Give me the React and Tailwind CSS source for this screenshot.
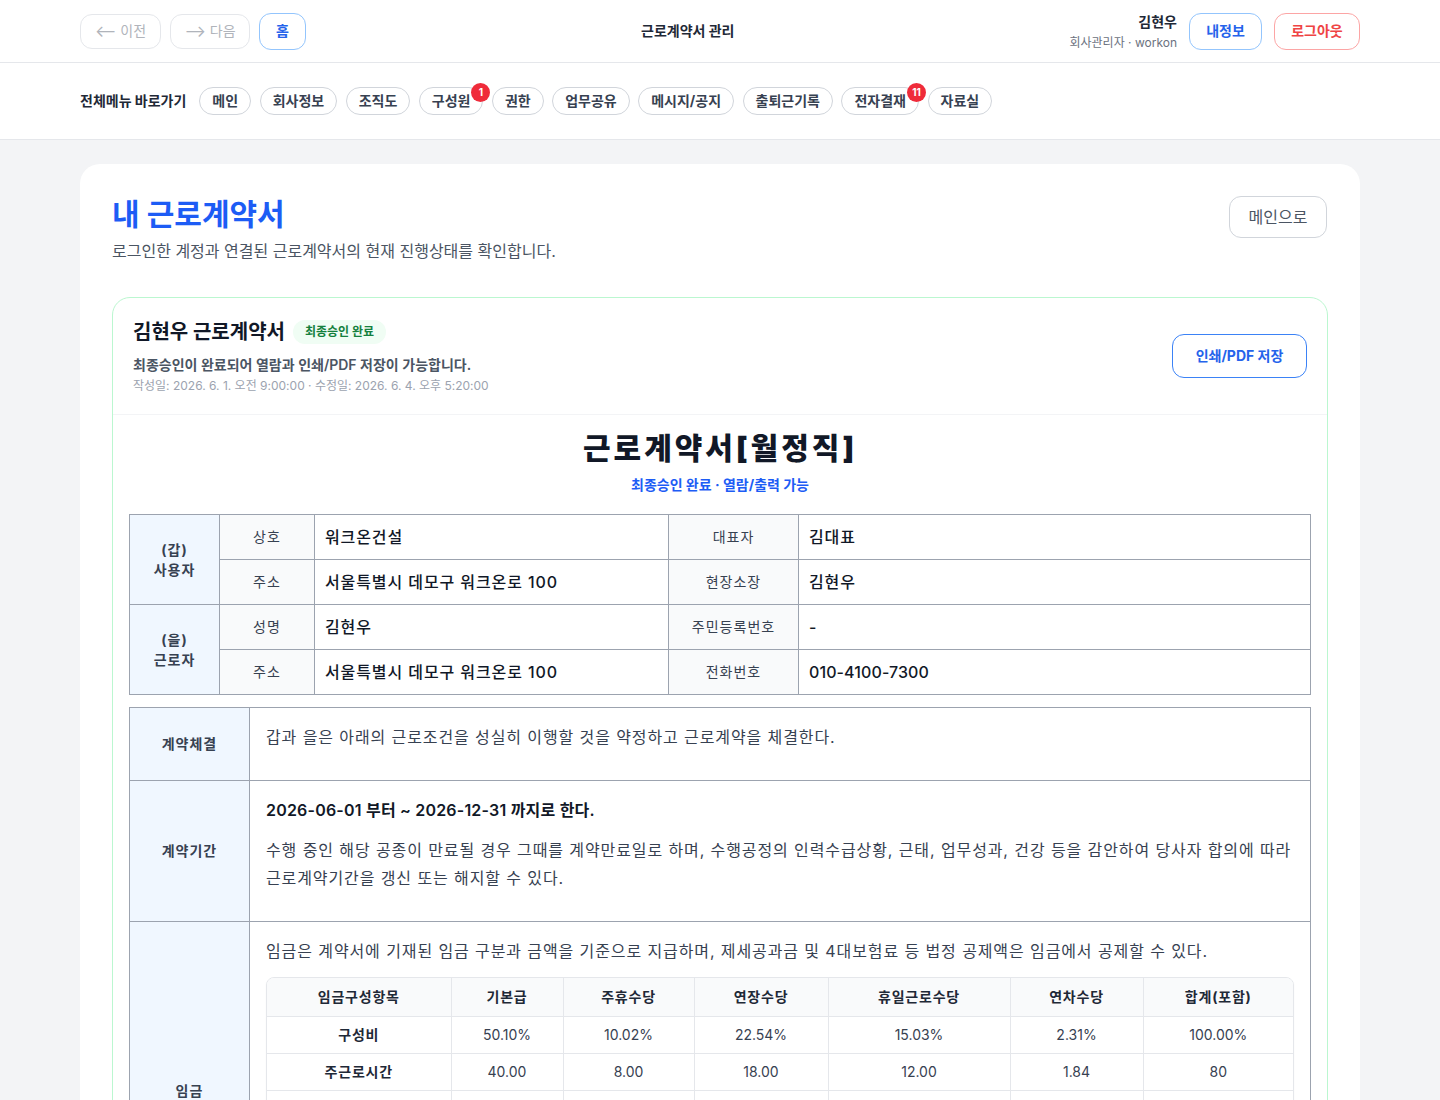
import React from "react";

const navItems = [
  { label: "메인" },
  { label: "회사정보" },
  { label: "조직도" },
  { label: "구성원", badge: "1" },
  { label: "권한" },
  { label: "업무공유" },
  { label: "메시지/공지" },
  { label: "출퇴근기록" },
  { label: "전자결재", badge: "11" },
  { label: "자료실" },
];

const wageHead = ["임금구성항목", "기본급", "주휴수당", "연장수당", "휴일근로수당", "연차수당", "합계(포함)"];
const wageRows = [
  ["구성비", "50.10%", "10.02%", "22.54%", "15.03%", "2.31%", "100.00%"],
  ["주근로시간", "40.00", "8.00", "18.00", "12.00", "1.84", "80"],
  ["월근로시간", "173.80", "34.76", "78.21", "52.14", "8.00", "346.91"],
  ["시급", "10,030", "10,030", "15,045", "15,045", "10,030", "-"],
  ["월 지급액", "1,743,214", "348,643", "1,176,669", "784,446", "80,240", "4,133,212"],
  ["비고", "-", "-", "-", "-", "-", "-"],
];
const wageCols = ["w-[184px]", "w-[112px]", "w-[131px]", "w-[134px]", "w-[182px]", "w-[133px]", "w-[150px]"];

export default function App() {
  return (
    <div className="min-h-screen bg-[#f3f4f6] font-['Inter','Noto_Sans_CJK_KR',sans-serif] text-[#111827]">
      {/* Top bar */}
      <header className="bg-white border-b border-[#e5e7eb] h-[63px] px-20 flex items-center justify-between">
        <div className="flex items-center gap-[9px]">
          <button className="h-[35px] w-[81px] rounded-xl border border-[#e5e7eb] text-[#b0b4bb] text-sm flex items-center justify-center gap-1">
            <span className="text-base leading-none">⟵</span> 이전
          </button>
          <button className="h-[35px] w-[80px] rounded-xl border border-[#e5e7eb] text-[#b0b4bb] text-sm flex items-center justify-center gap-1">
            <span className="text-base leading-none">⟶</span> 다음
          </button>
          <button className="h-[37px] w-[47px] rounded-xl border border-[#93c5fd] text-[#2563eb] text-sm font-bold">홈</button>
        </div>
        <div className="text-sm font-bold text-[#1f2937]">근로계약서 관리</div>
        <div className="flex items-center justify-end gap-3">
          <div className="flex flex-col items-end leading-tight">
            <span className="text-sm font-bold text-[#1f2937]">김현우</span>
            <span className="text-xs text-[#6b7280] mt-[3px]">회사관리자 · workon</span>
          </div>
          <button className="h-[37px] w-[73px] rounded-xl border border-[#93c5fd] text-[#2563eb] text-sm font-bold">내정보</button>
          <button className="h-[37px] w-[86px] rounded-xl border border-[#fca5a5] text-[#ef4444] text-sm font-bold">로그아웃</button>
        </div>
      </header>

      {/* Nav row */}
      <nav className="bg-white border-b border-[#e5e7eb] h-[77px] px-20 flex items-center">
        <span className="text-sm font-bold text-[#1f2937] mr-[13px]">전체메뉴 바로가기</span>
        <div className="flex items-center gap-[8.5px]">
          {navItems.map((n) => (
            <div key={n.label} className="relative">
              <span className="h-[28px] px-3 rounded-full border border-[#d1d5db] text-sm font-bold text-[#374151] flex items-center">
                {n.label}
              </span>
              {n.badge && (
                <span className="absolute -top-[4px] -right-[7px] min-w-[19px] h-[19px] px-[4px] rounded-full bg-[#ef2b3a] text-white text-[10px] font-bold flex items-center justify-center">
                  {n.badge}
                </span>
              )}
            </div>
          ))}
        </div>
      </nav>

      {/* Main */}
      <main className="px-20 pt-6 pb-10">
        <section className="bg-white rounded-[20px] px-8 pt-8 pb-8">
          <div className="flex items-start justify-between">
            <div>
              <h1 className="text-[30px] font-bold text-[#1d5cf5] leading-[36px]">내 근로계약서</h1>
              <p className="text-base text-[#4b5563] mt-[7px]">로그인한 계정과 연결된 근로계약서의 현재 진행상태를 확인합니다.</p>
            </div>
            <button className="h-[42px] w-[98px] rounded-xl border border-[#d1d5db] text-base text-[#4b5563] mr-px">메인으로</button>
          </div>

          <div className="mt-[34px] border border-[#bbf7d0] rounded-[18px] overflow-hidden">
            <div className="flex items-center justify-between px-5 pt-[20px] pb-[20px] border-b border-[#f3f4f6]">
              <div>
                <div className="flex items-center gap-[8px]">
                  <h2 className="text-xl font-bold text-[#111827]">김현우 근로계약서</h2>
                  <span className="h-[24px] px-[12px] rounded-full bg-[#f0fdf4] text-[#15803d] text-xs font-bold flex items-center">최종승인 완료</span>
                </div>
                <p className="text-sm font-semibold text-[#4b5563] mt-[9px]">최종승인이 완료되어 열람과 인쇄/PDF 저장이 가능합니다.</p>
                <p className="text-xs text-[#9ca3af] mt-[3px]">작성일: 2026. 6. 1. 오전 9:00:00 · 수정일: 2026. 6. 4. 오후 5:20:00</p>
              </div>
              <button className="h-[44px] w-[135px] rounded-xl border border-[#3b82f6] text-sm font-bold text-[#2563eb]">인쇄/PDF 저장</button>
            </div>

            <div className="px-4 pt-[15px] pb-8">
              <h3 className="text-center text-[30px] font-black tracking-[3px] text-[#111827] leading-[36px]">근로계약서[월정직]</h3>
              <p className="text-center text-sm font-bold text-[#1d5cf5] mt-[9px]">최종승인 완료 · 열람/출력 가능</p>

              {/* Parties table */}
              <table className="mt-[19px] w-full border-collapse border border-[#9ca3af] table-fixed">
                <colgroup>
                  <col className="w-[90px]" />
                  <col className="w-[95px]" />
                  <col className="w-[354px]" />
                  <col className="w-[130px]" />
                  <col />
                </colgroup>
                <tbody>
                  {[
                    ["(갑)\n사용자", "상호", "워크온건설", "대표자", "김대표"],
                    [null, "주소", "서울특별시 데모구 워크온로 100", "현장소장", "김현우"],
                    ["(을)\n근로자", "성명", "김현우", "주민등록번호", "-"],
                    [null, "주소", "서울특별시 데모구 워크온로 100", "전화번호", "010-4100-7300"],
                  ].map((r, i) => (
                    <tr key={i} className="h-[45px]">
                      {r[0] && (
                        <td rowSpan={2} className="border border-[#9ca3af] bg-[#f0f7ff] text-center text-sm font-bold tracking-[1px] text-[#374151] whitespace-pre-line leading-[20px]">
                          {r[0]}
                        </td>
                      )}
                      <td className="border border-[#9ca3af] bg-[#f9fafb] text-center text-sm tracking-[1px] text-[#374151]">{r[1]}</td>
                      <td className="border border-[#9ca3af] pl-[10px] pr-3 text-base font-medium tracking-[0.9px] text-[#111827]">{r[2]}</td>
                      <td className="border border-[#9ca3af] bg-[#f9fafb] text-center text-sm tracking-[1px] text-[#374151]">{r[3]}</td>
                      <td className={`border border-[#9ca3af] pl-[10px] pr-3 text-base font-medium text-[#111827] ${i === 3 ? "tracking-[0.1px]" : "tracking-[0.9px]"}`}>{r[4]}</td>
                    </tr>
                  ))}
                </tbody>
              </table>

              {/* Terms table */}
              <table className="mt-[12px] w-full border-collapse border border-[#9ca3af] table-fixed">
                <colgroup>
                  <col className="w-[120px]" />
                  <col />
                </colgroup>
                <tbody>
                  <tr>
                    <td className="border border-[#9ca3af] bg-[#f0f7ff] text-center text-sm font-bold tracking-[1px] text-[#374151] h-[73px]">계약체결</td>
                    <td className="border border-[#9ca3af] px-4 pt-[17px] pb-[26px] align-top text-base tracking-[0.9px] text-[#374151]">
                      갑과 을은 아래의 근로조건을 성실히 이행할 것을 약정하고 근로계약을 체결한다.
                    </td>
                  </tr>
                  <tr>
                    <td className="border border-[#9ca3af] bg-[#f0f7ff] text-center text-sm font-bold tracking-[1px] text-[#374151]">계약기간</td>
                    <td className="border border-[#9ca3af] px-4 pt-[17px] pb-[29px] align-top tracking-[0.9px]">
                      <p className="text-base font-semibold text-[#111827] leading-[24px] tracking-[0.2px]">2026-06-01 부터 ~ 2026-12-31 까지로 한다.</p>
                      <p className="text-base text-[#374151] leading-[28px] mt-[14px]">
                        수행 중인 해당 공종이 만료될 경우 그때를 계약만료일로 하며, 수행공정의 인력수급상황, 근태, 업무성과, 건강 등을 감안하여 당사자 합의에 따라 근로계약기간을 갱신 또는 해지할 수 있다.
                      </p>
                    </td>
                  </tr>
                  <tr>
                    <td className="border border-[#9ca3af] bg-[#f0f7ff] text-center text-sm font-bold tracking-[1px] text-[#374151]">임금</td>
                    <td className="border border-[#9ca3af] px-4 pt-[17px] pb-[20px] align-top">
                      <p className="text-base text-[#374151] leading-[24px] tracking-[0.9px]">
                        임금은 계약서에 기재된 임금 구분과 금액을 기준으로 지급하며, 제세공과금 및 4대보험료 등 법정 공제액은 임금에서 공제할 수 있다.
                      </p>
                      <div className="mt-[14px] rounded-lg border border-[#e5e7eb] overflow-hidden shadow-[0_1px_2px_rgba(0,0,0,0.04)]">
                        <table className="w-full border-collapse table-fixed">
                          <colgroup>
                            {wageCols.map((c, i) => (
                              <col key={i} className={c} />
                            ))}
                          </colgroup>
                          <thead>
                            <tr className="h-[38px] bg-[#f9fafb]">
                              {wageHead.map((h, i) => (
                                <th key={h} className={`text-center text-sm font-bold tracking-[0.8px] text-[#1f2937] border-b border-[#e5e7eb] ${i > 0 ? "border-l" : ""}`}>
                                  {h}
                                </th>
                              ))}
                            </tr>
                          </thead>
                          <tbody>
                            {wageRows.map((r, ri) => (
                              <tr key={ri} className="h-[37px]">
                                {r.map((c, ci) => (
                                  <td
                                    key={ci}
                                    className={`text-center text-sm border-[#e5e7eb] ${ri < wageRows.length - 1 ? "border-b" : ""} ${ci > 0 ? "border-l text-[#374151]" : "font-bold tracking-[0.8px] text-[#1f2937]"}`}
                                  >
                                    {c}
                                  </td>
                                ))}
                              </tr>
                            ))}
                          </tbody>
                        </table>
                      </div>
                    </td>
                  </tr>
                </tbody>
              </table>
            </div>
          </div>
        </section>
      </main>
    </div>
  );
}
